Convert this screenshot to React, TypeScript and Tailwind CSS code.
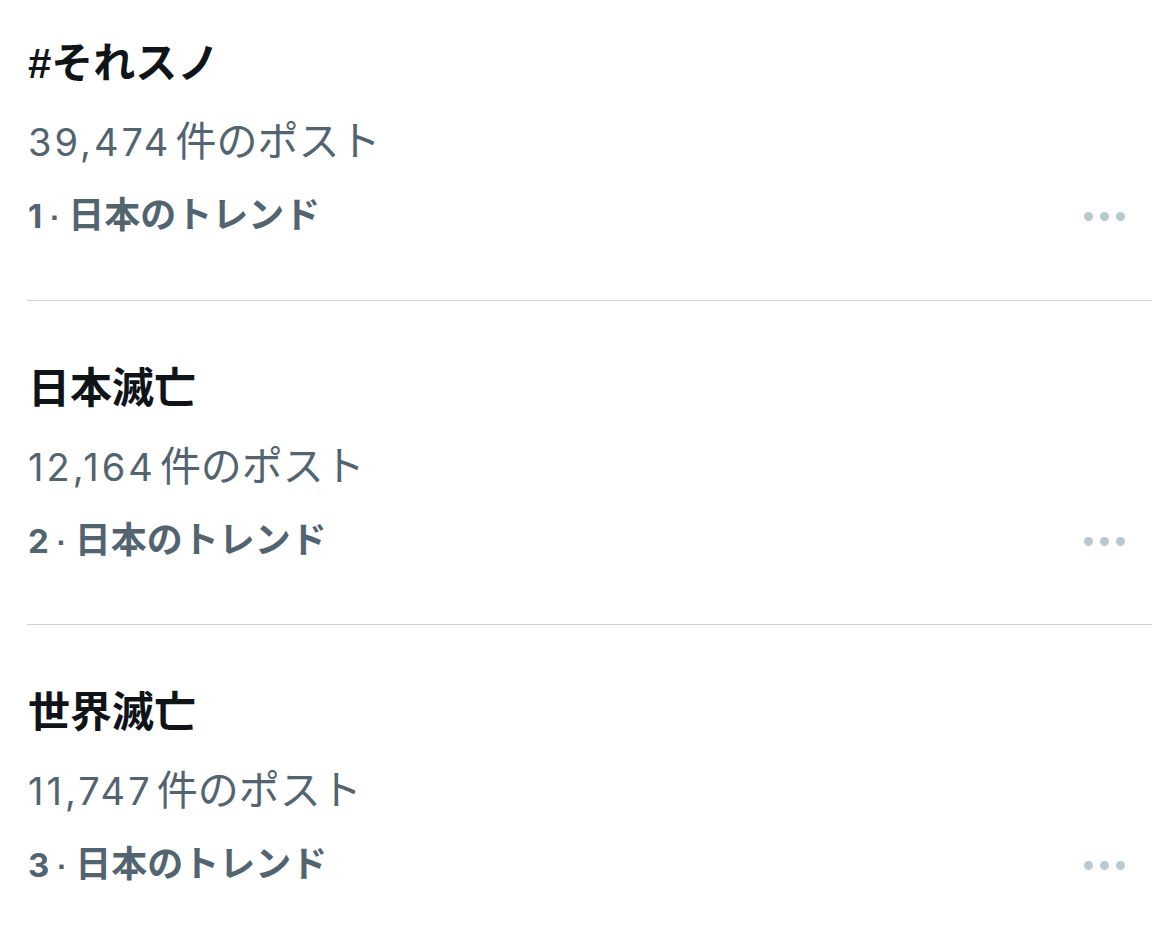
import React from "react";

const items = [
  { title: "#それスノ", count: "39,474", rank: "1" },
  { title: "日本滅亡", count: "12,164", rank: "2" },
  { title: "世界滅亡", count: "11,747", rank: "3" },
];

const font = {
  fontFamily: '"Liberation Sans", "Noto Sans CJK JP", sans-serif',
};
const digitFont = {
  fontFamily: 'Inter, "Liberation Sans", sans-serif',
};

function Dots() {
  return (
    <div className="flex items-center gap-[7px] mr-[27px]">
      <span className="block w-[9px] h-[9px] rounded-full bg-[#b9c9d2]" />
      <span className="block w-[9px] h-[9px] rounded-full bg-[#b9c9d2]" />
      <span className="block w-[9px] h-[9px] rounded-full bg-[#b9c9d2]" />
    </div>
  );
}

export default function App() {
  return (
    <div className="w-[1172px] h-[932px] bg-white overflow-hidden" style={font}>
      <div className="ml-[27px] mr-[20px]">
        {items.map((it, i) => (
          <div
            key={i}
            className={
              (i === 0 ? "pt-[36px] pb-[60px] border-b border-[#cfd2d4]" : "") +
              (i === 1 ? "pt-[60px] pb-[59px] border-b border-[#cfd2d4]" : "") +
              (i === 2 ? "pt-[60px]" : "")
            }
          >
            <div className="h-[56px] flex items-center pl-[1px] text-[42px] font-bold text-[#0f1419] leading-none">
              {it.title}
            </div>
            <div className="h-[100px] flex items-baseline pt-[30px] pl-[1px] text-[#536471] leading-none">
              <span className="text-[38px] tracking-[3px]" style={digitFont}>
                {it.count}
              </span>
              <span className="text-[41px] ml-[4px]">件のポスト</span>
            </div>
            <div className="h-[48px] flex items-center justify-between">
              <div className="flex items-baseline pl-[1px] font-bold text-[#536471] leading-none">
                <span className="text-[33px]" style={digitFont}>
                  {it.rank}
                </span>
                <span className="text-[30px] mx-[8px]">·</span>
                <span className="text-[36px]">日本のトレンド</span>
              </div>
              <Dots />
            </div>
          </div>
        ))}
      </div>
    </div>
  );
}
